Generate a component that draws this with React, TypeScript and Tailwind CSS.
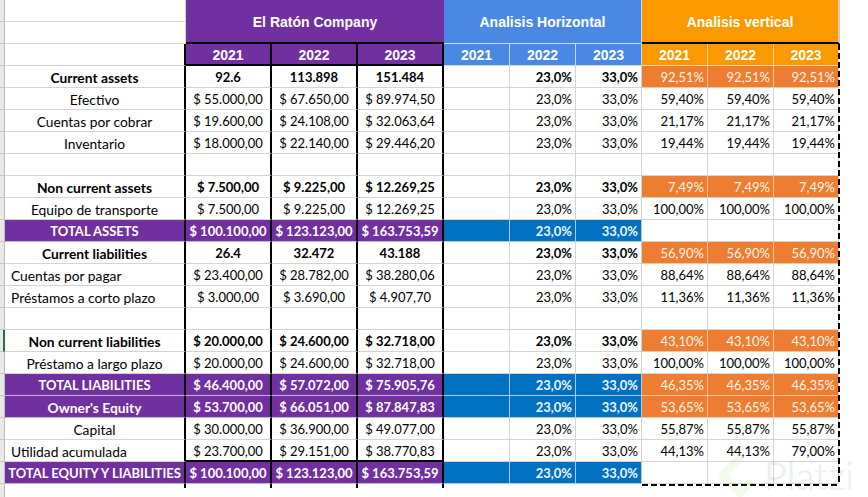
type Fill = "none" | "purple" | "blue" | "orange"

type Row = {
  label: string
  kind: "normal" | "bold" | "total" | "blank"
  left?: boolean
  caps?: boolean
  vals?: string[]
  hz?: string[]
  vt?: string[]
  orange?: boolean
  blackBottom?: boolean
  selected?: boolean
}

const rows: Row[] = [
  { label: "Current assets", kind: "bold", vals: ["92.6", "113.898", "151.484"], hz: ["23,0%", "33,0%"], vt: ["92,51%", "92,51%", "92,51%"], orange: true },
  { label: "Efectivo", kind: "normal", vals: ["$ 55.000,00", "$ 67.650,00", "$ 89.974,50"], hz: ["23,0%", "33,0%"], vt: ["59,40%", "59,40%", "59,40%"] },
  { label: "Cuentas por cobrar", kind: "normal", vals: ["$ 19.600,00", "$ 24.108,00", "$ 32.063,64"], hz: ["23,0%", "33,0%"], vt: ["21,17%", "21,17%", "21,17%"] },
  { label: "Inventario", kind: "normal", vals: ["$ 18.000,00", "$ 22.140,00", "$ 29.446,20"], hz: ["23,0%", "33,0%"], vt: ["19,44%", "19,44%", "19,44%"] },
  { label: "", kind: "blank" },
  { label: "Non current assets", kind: "bold", vals: ["$ 7.500,00", "$ 9.225,00", "$ 12.269,25"], hz: ["23,0%", "33,0%"], vt: ["7,49%", "7,49%", "7,49%"], orange: true },
  { label: "Equipo de transporte", kind: "normal", vals: ["$ 7.500,00", "$ 9.225,00", "$ 12.269,25"], hz: ["23,0%", "33,0%"], vt: ["100,00%", "100,00%", "100,00%"] },
  { label: "TOTAL ASSETS", kind: "total", caps: true, vals: ["$ 100.100,00", "$ 123.123,00", "$ 163.753,59"], hz: ["23,0%", "33,0%"], vt: ["", "", ""] },
  { label: "Current liabilities", kind: "bold", vals: ["26.4", "32.472", "43.188"], hz: ["23,0%", "33,0%"], vt: ["56,90%", "56,90%", "56,90%"], orange: true },
  { label: "Cuentas por pagar", kind: "normal", left: true, vals: ["$ 23.400,00", "$ 28.782,00", "$ 38.280,06"], hz: ["23,0%", "33,0%"], vt: ["88,64%", "88,64%", "88,64%"] },
  { label: "Préstamos a corto plazo", kind: "normal", left: true, vals: ["$ 3.000,00", "$ 3.690,00", "$ 4.907,70"], hz: ["23,0%", "33,0%"], vt: ["11,36%", "11,36%", "11,36%"] },
  { label: "", kind: "blank" },
  { label: "Non current liabilities", kind: "bold", selected: true, vals: ["$ 20.000,00", "$ 24.600,00", "$ 32.718,00"], hz: ["23,0%", "33,0%"], vt: ["43,10%", "43,10%", "43,10%"], orange: true },
  { label: "Préstamo a largo plazo", kind: "normal", vals: ["$ 20.000,00", "$ 24.600,00", "$ 32.718,00"], hz: ["23,0%", "33,0%"], vt: ["100,00%", "100,00%", "100,00%"] },
  { label: "TOTAL LIABILITIES", kind: "total", caps: true, vals: ["$ 46.400,00", "$ 57.072,00", "$ 75.905,76"], hz: ["23,0%", "33,0%"], vt: ["46,35%", "46,35%", "46,35%"], orange: true },
  { label: "Owner's Equity", kind: "total", vals: ["$ 53.700,00", "$ 66.051,00", "$ 87.847,83"], hz: ["23,0%", "33,0%"], vt: ["53,65%", "53,65%", "53,65%"], orange: true },
  { label: "Capital", kind: "normal", vals: ["$ 30.000,00", "$ 36.900,00", "$ 49.077,00"], hz: ["23,0%", "33,0%"], vt: ["55,87%", "55,87%", "55,87%"] },
  { label: "Utilidad acumulada", kind: "normal", left: true, blackBottom: true, vals: ["$ 23.700,00", "$ 29.151,00", "$ 38.770,83"], hz: ["23,0%", "33,0%"], vt: ["44,13%", "44,13%", "79,00%"] },
  { label: "TOTAL EQUITY Y LIABILITIES", kind: "total", caps: true, vals: ["$ 100.100,00", "$ 123.123,00", "$ 163.753,59"], hz: ["23,0%", "33,0%"], vt: ["", "", ""] },
]

const fills: Record<Fill, string> = {
  none: "bg-white text-black",
  purple: "bg-[#7030a0] text-white",
  blue: "bg-[#0070c0] text-[#eef5fc]",
  orange: "bg-[#ed7d31] text-[#fff3ea]",
}

const gridB: Record<Fill, string> = {
  none: "border-b border-b-[#d4d4d4]",
  purple: "border-b border-b-[#c9b3dc]",
  blue: "border-b border-b-[#a9cbe9]",
  orange: "border-b border-b-[#f3c4a2]",
}

const gridR: Record<Fill, string> = {
  none: "border-r border-r-[#d4d4d4]",
  purple: "border-r border-r-[#c9b3dc]",
  blue: "border-r border-r-[#a9cbe9]",
  orange: "border-r border-r-[#f3c4a2]",
}

function Cell({
  w,
  fill = "none",
  right,
  bottom,
  align = "center",
  bold,
  extra = "",
  children,
}: {
  w: string
  fill?: Fill
  right?: string
  bottom?: string
  align?: "center" | "left" | "right"
  bold?: boolean
  extra?: string
  children?: React.ReactNode
}) {
  const al =
    align === "center" ? "justify-center" : align === "left" ? "justify-start pl-[6px]" : "justify-end pr-[3px]"
  return (
    <div
      className={`${w} h-[22px] shrink-0 flex items-center pt-[3px] whitespace-nowrap overflow-hidden ${al} ${fills[fill]} ${right ?? gridR[fill]} ${bottom ?? gridB[fill]} ${bold ? "font-bold" : ""} ${extra}`}
    >
      {children}
    </div>
  )
}

function Strip({ selected }: { selected?: boolean }) {
  return (
    <div
      className={`w-[5px] h-[22px] shrink-0 bg-[#e9e9e9] border-b border-b-[#c6c6c6] ${selected ? "border-r-2 border-r-[#217346]" : "border-r border-r-[#bdbdbd]"}`}
    />
  )
}

const BLACK_R = "border-r-2 border-r-black"
const BLACK_B = "border-b-2 border-b-black"

function DataRow({ r }: { r: Row }) {
  const isTotal = r.kind === "total"
  const bold = r.kind === "bold" || isTotal
  const abFill: Fill = isTotal ? "purple" : "none"
  const hzFill: Fill = isTotal ? "blue" : "none"
  const vtFill: Fill = r.orange ? "orange" : "none"
  const vals = r.vals ?? ["", "", ""]
  const hz = r.hz ?? ["", ""]
  const vt = r.vt ?? ["", "", ""]
  const bb = r.blackBottom ? BLACK_B : undefined
  return (
    <div className="flex">
      <Strip selected={r.selected} />
      <Cell
        w="w-[181px]"
        fill={abFill}
        right={BLACK_R}
        align={r.left ? "left" : "center"}
        bold={bold}
        extra={r.caps ? "text-[13px]" : "text-[13.8px]"}
      >
        {r.label}
      </Cell>
      <Cell w="w-[86px]" fill={abFill} right={BLACK_R} bottom={bb} bold={bold}>
        {vals[0]}
      </Cell>
      <Cell w="w-[86px]" fill={abFill} right={BLACK_R} bottom={bb} bold={bold}>
        {vals[1]}
      </Cell>
      <Cell w="w-[86px]" fill={abFill} right={BLACK_R} bottom={bb} bold={bold}>
        {vals[2]}
      </Cell>
      <Cell w="w-[66px]" fill={hzFill} />
      <Cell w="w-[66px]" fill={hzFill} align="right" bold={bold}>
        {hz[0]}
      </Cell>
      <Cell w="w-[66px]" fill={hzFill} align="right" bold={bold}>
        {hz[1]}
      </Cell>
      <Cell w="w-[66px]" fill={vtFill} align="right">
        {vt[0]}
      </Cell>
      <Cell w="w-[66px]" fill={vtFill} align="right">
        {vt[1]}
      </Cell>
      <Cell w="w-[65px]" fill={vtFill} align="right">
        {vt[2]}
      </Cell>
    </div>
  )
}

export default function App() {
  return (
    <div className="relative w-[868px] h-[497px] overflow-hidden bg-white text-[13px] text-black font-['Lato',sans-serif]">
      {/* Title rows */}
      <div className="flex">
        <div className="flex flex-col">
          <div className="flex">
            <Strip />
            <Cell w="w-[181px]" />
          </div>
          <div className="flex">
            <Strip />
            <Cell w="w-[181px]" />
          </div>
        </div>
        <div className="w-[258px] h-[44px] flex items-center justify-center pt-[2px] bg-[#7030a0] text-white font-bold text-[14px] font-['Liberation_Sans',Arial,sans-serif] border-b-2 border-b-black">
          El Ratón Company
        </div>
        <div className="w-[198px] h-[44px] flex items-center justify-center pt-[2px] bg-[#4a89e3] text-white font-bold text-[14px] font-['Liberation_Sans',Arial,sans-serif] border-b border-b-[#c5d8f3] border-r border-r-[#c5d8f3]">
          Analisis Horizontal
        </div>
        <div className="w-[198px] h-[44px] flex items-center justify-center pt-[2px] bg-[#fb9a00] text-white font-bold text-[14px] font-['Liberation_Sans',Arial,sans-serif] border-b-2 border-b-black border-r-2 border-r-[#dcc7a6]">
          Analisis vertical
        </div>
      </div>

      {/* Year row */}
      <div className="flex font-['Liberation_Sans',Arial,sans-serif] text-[14px] font-bold">
        <Strip />
        <Cell w="w-[181px]" right={BLACK_R} />
        {["2021", "2022", "2023"].map((y) => (
          <Cell key={"p" + y} w="w-[86px]" fill="purple" right={BLACK_R} bottom={BLACK_B}>
            {y}
          </Cell>
        ))}
        {["2021", "2022", "2023"].map((y) => (
          <div
            key={"b" + y}
            className="w-[66px] h-[22px] shrink-0 flex items-center justify-center pt-[2px] bg-[#4a89e3] text-white border-r border-r-[#c5d8f3] border-b border-b-[#c5d8f3]"
          >
            {y}
          </div>
        ))}
        {["2021", "2022", "2023"].map((y, i) => (
          <div
            key={"o" + y}
            className={`${i === 2 ? "w-[65px]" : "w-[66px]"} h-[22px] shrink-0 flex items-center justify-center pt-[2px] bg-[#fb9a00] text-white border-r border-r-[#fcd49a] border-b border-b-[#fcd49a]`}
          >
            {y}
          </div>
        ))}
      </div>

      {rows.map((r, i) => (
        <DataRow key={i} r={r} />
      ))}

      {/* trailing partial row */}
      <div className="flex h-[13px]">
        <div className="w-[5px] h-full bg-[#e9e9e9] border-r border-r-[#bdbdbd]" />
        <div className="w-[181px] h-[4px] border-r-2 border-r-black" />
        <div className="w-[86px] h-[4px] border-r-2 border-r-black" />
        <div className="w-[86px] h-[4px] border-r-2 border-r-black" />
        <div className="w-[86px] h-[4px] border-r-2 border-r-black" />
      </div>

      {/* copy marquee */}
      <svg className="absolute left-[641px] top-[44px] pointer-events-none" width="200" height="443">
        <line x1="198" y1="0" x2="198" y2="441" stroke="black" strokeWidth="2" strokeDasharray="6 3" />
        <line x1="1" y1="441" x2="199" y2="441" stroke="black" strokeWidth="2" strokeDasharray="6 3" />
      </svg>

      {/* watermark */}
      <div className="absolute left-[716px] top-[452px] flex items-center gap-[8px] pointer-events-none">
        <svg width="40" height="46" viewBox="0 0 40 46">
          <path
            d="M24 5 L7 23 L24 41 L33 32"
            fill="none"
            stroke="#9ccf6a"
            strokeOpacity="0.12"
            strokeWidth="8"
            strokeLinejoin="round"
            strokeLinecap="round"
          />
        </svg>
        <span className="text-[38px] leading-none text-black/[0.06] font-['Lato',sans-serif]">Platzi</span>
      </div>
    </div>
  )
}
